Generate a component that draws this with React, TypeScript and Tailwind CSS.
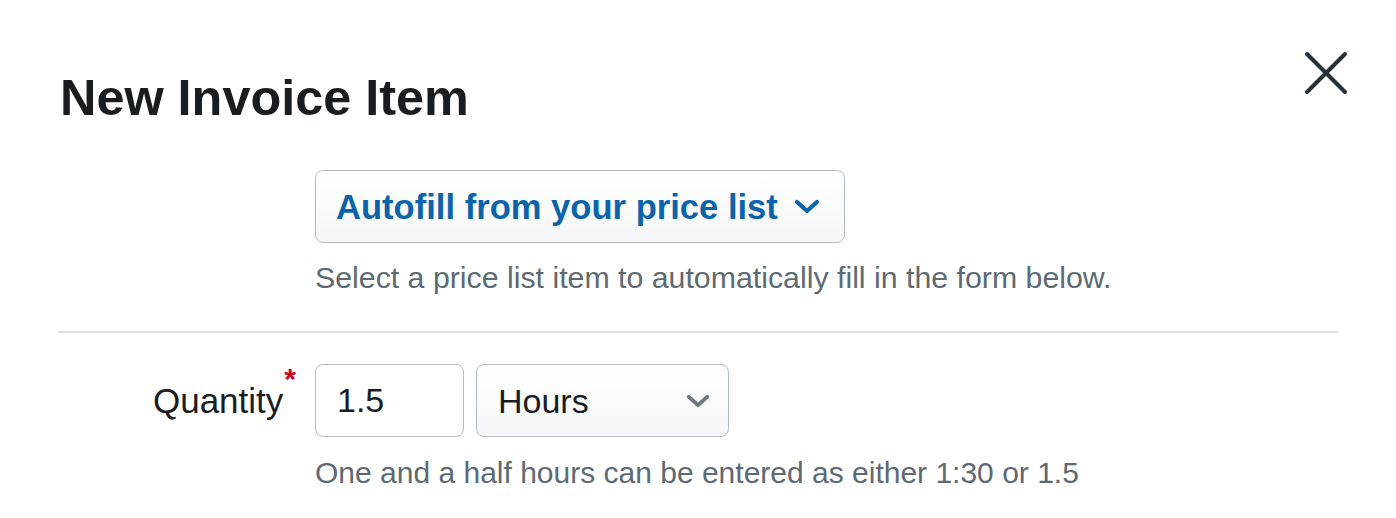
import { ChangeEvent, useState } from 'react'

const font = { fontFamily: '"Liberation Sans", Arial, Helvetica, sans-serif' }

function Chevron({ className }: { className: string }) {
  return (
    <svg viewBox="0 0 26 15" className={className} fill="none" stroke="currentColor" strokeWidth="4.2" strokeLinecap="round" strokeLinejoin="round">
      <polyline points="3,3 13,12 23,3" />
    </svg>
  )
}

export default function App() {
  const [qty, setQty] = useState('1.5')

  return (
    <div className="relative w-[1396px] h-[518px] bg-white px-[58px] pt-[68px] overflow-hidden" style={font}>
      {/* close */}
      <button className="absolute left-[1302px] top-[50px] w-[48px] h-[46px] text-[#263238]" aria-label="Close">
        <svg viewBox="0 0 48 46" className="w-[48px] h-[46px]" fill="none" stroke="currentColor" strokeWidth="4" strokeLinecap="round">
          <line x1="5" y1="4" x2="43" y2="42" />
          <line x1="43" y1="4" x2="5" y2="42" />
        </svg>
      </button>

      <h1 className="text-[50.4px] leading-[60px] font-bold text-[#1a1d1f] pl-[2px]">New Invoice Item</h1>

      {/* autofill */}
      <div className="mt-[42px] pl-[257px]">
        <button className="h-[73px] w-[530px] flex items-center pl-[20px] pr-[24px] rounded-[8px] border border-[#b4bdc3] bg-gradient-to-b from-white to-[#f5f6f7] text-[#0b64ab]">
          <span className="text-[34.6px] leading-[40px] font-bold">Autofill from your price list</span>
          <Chevron className="ml-[16px] w-[26px] h-[15px]" />
        </button>
        <p className="mt-[17px] text-[30.3px] leading-[36px] text-[#5d6a73]">
          Select a price list item to automatically fill in the form below.
        </p>
      </div>

      <div className="mt-[35px] h-[2px] bg-[#dadee1]" />

      {/* quantity */}
      <div className="mt-[31px] flex items-start">
        <label className="h-[73px] w-[257px] flex justify-end pr-[19px]">
          <span className="self-center text-[35px] leading-[40px] text-[#1a1d1f]">Quantity</span>
          <span className="ml-[1px] text-[30px] leading-[30px] font-bold text-[#d0021b]">*</span>
        </label>
        <div>
          <div className="flex gap-[12px]">
            <input
              value={qty}
              onChange={(e: ChangeEvent<HTMLInputElement>) => setQty(e.target.value)}
              className="h-[73px] w-[149px] px-[21px] rounded-[8px] border border-[#b4bdc3] bg-white text-[34px] text-[#1a1d1f] outline-none"
              style={font}
            />
            <button className="h-[73px] w-[253px] flex items-center justify-between pl-[21px] pr-[18px] rounded-[8px] border border-[#b4bdc3] bg-gradient-to-b from-white to-[#f5f6f7]">
              <span className="text-[34px] leading-[40px] text-[#1a1d1f]">Hours</span>
              <Chevron className="w-[24px] h-[14px] text-[#6b7780]" />
            </button>
          </div>
          <p className="mt-[18px] text-[30px] leading-[36px] text-[#5d6a73]">
            One and a half hours can be entered as either 1:30 or 1.5
          </p>
        </div>
      </div>
    </div>
  )
}
